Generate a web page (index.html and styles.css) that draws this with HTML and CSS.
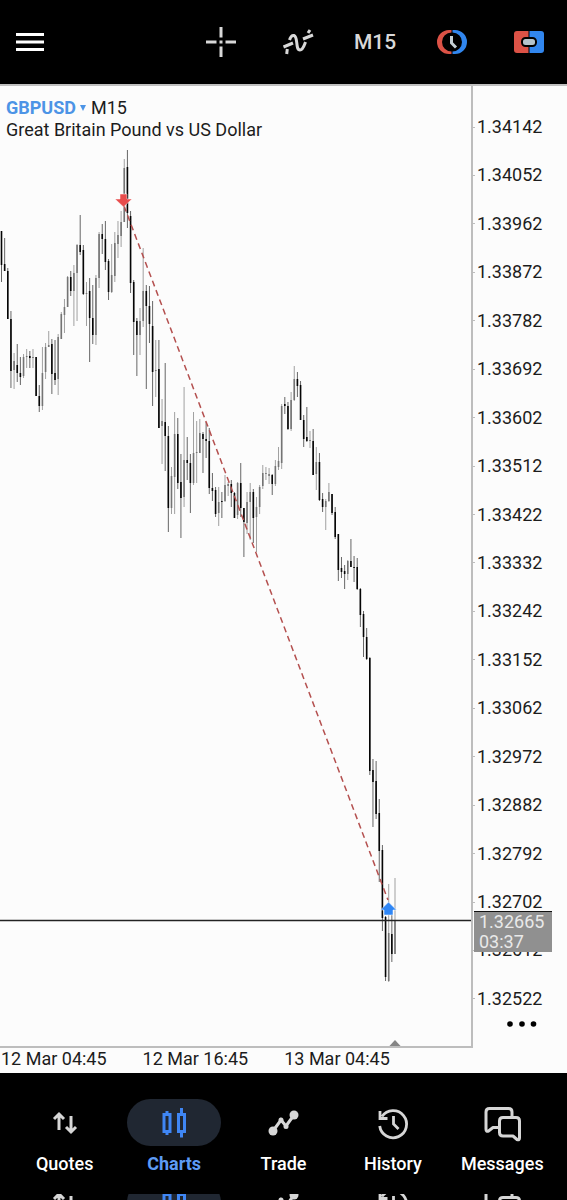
FILE: index.html
```html
<!DOCTYPE html>
<html lang="en">
<head>
    <meta charset="UTF-8">
    <meta name="viewport" content="width=device-width, initial-scale=1.0">
    <title>GBPUSD M15</title>
    <link rel="stylesheet" href="styles.css">
</head>
<body>

<!-- Shared icons -->
<svg class="icon-defs" aria-hidden="true">
    <symbol id="icon-quotes" viewBox="0 0 38 38">
        <path d="M13 26V10M8 15l5-5 5 5M25 12v16M20 23l5 5 5-5" fill="none" stroke="currentColor" stroke-width="3"/>
    </symbol>
    <symbol id="icon-charts" viewBox="0 0 38 38">
        <path d="M9 10.500h6v17h-6zM12 7v3.500M12 27.500v3.500M23.500 10.500h6v17h-6zM26.500 4v6.500M26.500 27.500v6" fill="none" stroke="currentColor" stroke-width="3"/>
    </symbol>
    <symbol id="icon-trade" viewBox="0 0 38 38">
        <path d="M8 27l8-11 5 6 8-11" fill="none" stroke="currentColor" stroke-width="3"/>
        <circle cx="8" cy="27" r="4.500" fill="currentColor"/>
        <circle cx="16" cy="16" r="2.500" fill="currentColor"/>
        <circle cx="21" cy="22.500" r="2.500" fill="currentColor"/>
        <circle cx="29" cy="11" r="4.500" fill="currentColor"/>
    </symbol>
    <symbol id="icon-history" viewBox="0 0 38 38">
        <path d="M8 12.500A13.500 13.500 0 1 1 5.700 22M6 7v7.500h7.500M19.500 12v8l5 5" fill="none" stroke="currentColor" stroke-width="2.800"/>
    </symbol>
    <symbol id="icon-messages" viewBox="0 0 38 38">
        <path d="M15.500 23.500H10L5.500 27Q3 28 3 25V8q0-3.500 3.500-3.500h19q3.500 0 3.500 3.500v5M20 13.500h13q3.500 0 3.500 3.500v17q0 2.500-2.500 1.500L30 32H20q-3.500 0-3.500-3.500V17q0-3.500 3.500-3.500z" fill="none" stroke="currentColor" stroke-width="3" stroke-linejoin="round"/>
    </symbol>
</svg>

<!-- Top Toolbar -->
<header class="toolbar">
    <button class="tool-btn menu-btn" aria-label="Menu">
        <svg width="28" height="28" viewBox="0 0 28 28"><path d="M0 6.500h28M0 14h28M0 21.500h28" stroke="#fff" stroke-width="3"/></svg>
    </button>
    <div class="tools">
        <button class="tool-btn" aria-label="Crosshair">
            <svg width="30" height="30" viewBox="0 0 30 30"><path d="M15 0v10.500M15 19.500V30M0 15h10.500M19.500 15H30M13.500 15h3" stroke="#d8d8d8" stroke-width="3"/></svg>
        </button>
        <button class="tool-btn" aria-label="Indicators">
            <svg width="32" height="26" viewBox="0 0 32 26"><path d="M1.500 18L11 14M21 10l10-4M4.700 25l.6-5M7.500 11Q9 6 12 6.500C16.500 8 13 21 18 21c3 0 4-4 5.500-8M26 4l2-3" fill="none" stroke="#d8d8d8" stroke-width="3"/></svg>
        </button>
        <button class="tool-btn timeframe">M15</button>
        <button class="tool-btn" aria-label="Trading hours">
            <svg width="30" height="24" viewBox="0 0 30 24">
                <path d="M14.500 0H12A12 12 0 0 0 12 24H14.500V21.500A9.500 9.500 0 0 1 14.500 2.500z" fill="#dc5246"/>
                <path d="M15.500 0H18A12 12 0 0 1 18 24H15.500V21.500A9.500 9.500 0 0 0 15.500 2.500z" fill="#3186ee"/>
                <path d="M14.500 6v7l4.500 4.500" fill="none" stroke="#c5d0d6" stroke-width="3"/>
            </svg>
        </button>
        <button class="tool-btn" aria-label="New order">
            <svg width="30" height="22" viewBox="0 0 30 22">
                <path d="M14.500 0H3Q0 0 0 3v16q0 3 3 3h11.500z" fill="#dc5246"/>
                <path d="M15.500 0H27q3 0 3 3v16q0 3-3 3H15.500z" fill="#3186ee"/>
                <rect x="8" y="7" width="14" height="8" rx="3.500" fill="#b5c4cc" stroke="#000" stroke-width="2"/>
            </svg>
        </button>
    </div>
</header>

<!-- Chart -->
<main class="chart">
    <div class="plot-column">
        <div class="plot">
            <svg class="plot-svg" viewBox="0 86 471 960" role="img" aria-label="GBPUSD candlestick chart">
                <g id="candles"></g>
                <path d="M124 206L388 900" stroke="#b4504f" stroke-width="1.500" stroke-dasharray="6 4" fill="none"/>
                <path d="M120 194h7v5h5l-8.500 8-8.500-8h5z" fill="#e84c4c" stroke="#fff" stroke-width=".5"/>
                <path d="M0 920.500h471" stroke="#222" stroke-width="1.500"/>
                <path d="M388.500 902l8 8h-3.500v5h-9v-5h-3.500z" fill="#2f86f5" stroke="#fff" stroke-width=".5"/>
                <path d="M388.500 1047l6.500-7 6.500 7z" fill="#858585"/>
            </svg>
            <div class="chart-title">
                <h1><button class="symbol-btn">GBPUSD <span class="caret"></span></button> M15</h1>
                <p>Great Britain Pound vs US Dollar</p>
            </div>
        </div>
        <div class="time-scale">
            <span>12 Mar 04:45</span>
            <span>12 Mar 16:45</span>
            <span>13 Mar 04:45</span>
        </div>
    </div>
    <div class="price-scale">
        <ul class="prices" id="prices"></ul>
        <div class="price-tag">
            <p>1.32665</p>
            <p>03:37</p>
        </div>
        <button class="more-btn" aria-label="More">
            <svg width="30" height="6" viewBox="0 0 30 6"><circle cx="3" cy="3" r="2.800"/><circle cx="15" cy="3" r="2.800"/><circle cx="26.500" cy="3" r="2.800"/></svg>
        </button>
    </div>
</main>

<!-- Bottom Navigation -->
<nav class="bottom-nav">
    <a href="#quotes" class="nav-item"><span class="nav-icon"><svg><use href="#icon-quotes"/></svg></span>Quotes</a>
    <a href="#charts" class="nav-item active"><span class="nav-icon"><svg><use href="#icon-charts"/></svg></span>Charts</a>
    <a href="#trade" class="nav-item"><span class="nav-icon"><svg><use href="#icon-trade"/></svg></span>Trade</a>
    <a href="#history" class="nav-item"><span class="nav-icon"><svg><use href="#icon-history"/></svg></span>History</a>
    <a href="#messages" class="nav-item"><span class="nav-icon"><svg><use href="#icon-messages"/></svg></span>Messages</a>
</nav>
<div class="nav-edge" aria-hidden="true">
    <div class="nav-item"><span class="nav-icon"><svg><use href="#icon-quotes"/></svg></span></div>
    <div class="nav-item active"><span class="nav-icon"><svg><use href="#icon-charts"/></svg></span></div>
    <div class="nav-item"><span class="nav-icon"><svg><use href="#icon-trade"/></svg></span></div>
    <div class="nav-item"><span class="nav-icon"><svg><use href="#icon-history"/></svg></span></div>
    <div class="nav-item"><span class="nav-icon"><svg><use href="#icon-messages"/></svg></span></div>
</div>

<script src="chart.js"></script>
</body>
</html>
```
FILE: styles.css
```css
* {
    margin: 0;
    padding: 0;
    box-sizing: border-box;
}

body {
    font-family: Roboto, Arial, sans-serif;
    font-size: 18px;
    line-height: 22px;
    color: #1c1c1c;
    background-color: #000;
    min-height: 100vh;
    display: flex;
    flex-direction: column;
}

button {
    font: inherit;
    color: inherit;
    background: none;
    border: none;
    cursor: pointer;
}

svg {
    display: block;
}

.icon-defs {
    display: none;
}

.toolbar {
    display: flex;
    align-items: center;
    justify-content: space-between;
    height: 84px;
    padding: 0 16px;
}

.tools {
    display: flex;
    align-items: center;
    gap: 33px;
}

.tool-btn {
    display: flex;
    align-items: center;
    justify-content: center;
}

.tools .tool-btn {
    width: 44px;
}

.timeframe {
    color: #d8d8d8;
    font-size: 21px;
    font-weight: 500;
}

.chart {
    display: flex;
    background-color: #fcfcfc;
    border-top: 2px solid #c0c0c0;
}

.plot-column {
    flex: 1;
    min-width: 0;
}

.plot {
    position: relative;
    border-right: 2px solid #bdbdbd;
    border-bottom: 2px solid #bdbdbd;
}

.plot-svg {
    width: 100%;
    height: auto;
}

.chart-title {
    position: absolute;
    top: 11px;
    left: 6px;
}

.chart-title h1 {
    font-size: 18px;
    font-weight: 400;
}

.symbol-btn {
    color: #4c94e6;
    font-weight: 700;
}

.caret {
    display: inline-block;
    border: 3px solid transparent;
    border-top: 6px solid #4c94e6;
    border-bottom: none;
    vertical-align: 3px;
}

.time-scale {
    display: grid;
    grid-template-columns: 30% 30% 40%;
    height: 25px;
    padding-left: 1px;
    white-space: nowrap;
}

.price-scale {
    position: relative;
    width: 94px;
    padding-top: 30px;
}

.prices {
    list-style: none;
    height: 894px;
    display: flex;
    flex-direction: column;
    justify-content: space-between;
}

.prices li {
    display: flex;
    align-items: center;
    gap: 2px;
}

.prices li::before {
    content: "";
    width: 2px;
    height: 1px;
    background-color: #bdbdbd;
}

.price-tag {
    position: absolute;
    top: 825px;
    left: 1px;
    width: 78px;
    padding-left: 5px;
    line-height: 20px;
    color: #e9e9e9;
    background-color: #909090;
    border-top: 1px solid #111;
}

.more-btn {
    display: block;
    margin: 11px 0 0 34px;
}

.bottom-nav {
    display: flex;
    height: 121px;
    padding: 26px 10px 0;
}

.nav-item {
    flex: 1;
    display: flex;
    flex-direction: column;
    align-items: center;
    gap: 7px;
    color: #fff;
    font-weight: 500;
    text-decoration: none;
}

.nav-icon {
    width: 94px;
    height: 47px;
    border-radius: 24px;
    display: flex;
    align-items: center;
    justify-content: center;
    color: #d6d6d6;
}

.nav-icon svg {
    width: 38px;
    height: 38px;
}

.nav-item.active {
    color: #5d9bf5;
    font-weight: 700;
}

.active .nav-icon {
    color: #3f86f4;
    background-color: #202732;
}

.nav-edge {
    display: flex;
    height: 6px;
    padding: 0 10px;
    overflow: hidden;
}

.nav-edge .nav-icon {
    margin-top: -15px;
    flex-shrink: 0;
}
```
FILE: chart.js
```javascript
// Each candle: high, low, body top, body bottom, 1 = bearish / 0 = bullish
const candles = [
    [231,282,231,265,1], [238,271,264,271,1], [268,319,271,319,1], [311,388,319,371,1], [353,389,361,370,0],
    [344,382,365,373,1], [357,385,373,377,1], [354,378,357,376,0], [349,368,356,357,0], [351,368,356,358,1],
    [349,368,357,358,0], [357,396,357,396,1], [385,412,396,406,1], [347,410,373,406,0], [343,379,347,372,0],
    [331,347,345,347,0], [339,394,344,374,1], [340,385,373,380,1], [334,395,337,379,0], [312,339,314,339,0],
    [299,333,307,315,0], [276,307,277,307,0], [271,296,277,291,1], [265,326,273,291,0], [244,321,245,273,0],
    [215,255,245,252,1], [245,295,250,294,1], [282,326,293,294,0], [278,362,291,318,1], [285,344,318,335,1],
    [275,345,278,335,0], [232,288,234,278,0], [224,254,234,239,1], [221,270,239,262,1], [259,300,261,292,1],
    [244,293,275,292,0], [232,282,243,276,0], [221,258,235,244,0], [211,247,222,236,0], [159,222,168,222,0],
    [150,228,167,213,1], [211,293,216,283,1], [280,355,282,322,1], [318,376,321,335,1], [308,355,321,335,0],
    [248,327,291,321,0], [285,389,291,306,1], [286,343,306,324,1], [301,406,326,372,1], [340,397,370,371,0],
    [340,428,369,428,1], [399,464,421,426,0], [363,471,422,436,1], [426,532,436,508,1], [467,514,476,508,0],
    [412,514,434,477,0], [418,489,434,483,1], [454,538,482,498,1], [387,507,460,497,0], [437,480,460,463,1],
    [454,513,463,483,1], [412,485,453,483,0], [421,483,452,453,0], [419,453,433,453,0], [432,473,434,439,1],
    [422,458,439,441,1], [428,494,441,488,1], [473,501,488,491,1], [487,517,490,514,1], [487,526,502,513,0],
    [492,518,501,502,1], [475,502,485,501,0], [482,496,484,486,0], [480,507,484,493,1], [492,518,493,518,1],
    [482,519,483,515,0], [463,517,483,508,1], [508,557,508,522,1], [492,534,502,523,0], [483,540,492,502,0],
    [489,543,492,518,1], [497,552,507,517,0], [485,514,487,507,0], [465,489,473,486,0], [467,480,473,474,0],
    [468,484,474,476,0], [474,495,475,484,1], [460,486,466,484,0], [447,470,461,467,0], [404,469,406,463,0],
    [397,414,404,406,1], [402,430,406,429,1], [392,431,400,429,0], [366,401,379,400,0], [372,397,379,386,1],
    [381,420,385,420,1], [415,447,420,439,1], [407,442,437,441,1], [431,448,440,441,0], [429,475,441,475,1],
    [447,490,462,474,0], [453,501,462,500,1], [493,512,499,507,1], [499,530,501,507,0], [483,502,492,501,0],
    [494,515,494,513,1], [507,539,512,537,1], [534,581,534,570,1], [557,578,568,572,1], [565,589,571,574,1],
    [560,580,561,574,0], [539,567,561,567,1], [556,582,567,568,1], [558,590,567,589,1], [588,627,589,615,1],
    [611,657,614,637,1], [628,660,637,659,1], [657,775,658,771,1], [759,827,770,782,1], [761,819,781,814,1],
    [799,882,813,851,1], [845,931,850,918,1], [916,981,917,977,1], [884,982,933,981,0], [915,962,934,954,1],
    [878,954,920,954,0]
];

const step = 3.148;
let markup = '';
candles.forEach(([high, low, top, bottom, bearish], i) => {
    const x = 1.5 + i * step;
    const wick = bearish ? '#666' : '#a0a0a0';
    const body = bearish ? '#050505' : '#747474';
    markup += `<path d="M${x} ${high}V${low}" stroke="${wick}" stroke-width="1"/>`;
    markup += `<path d="M${x} ${top}V${bottom}" stroke="${body}" stroke-width="1.6"/>`;
});
document.getElementById('candles').innerHTML = markup;

// Price labels, 90 points apart
const prices = document.getElementById('prices');
for (let points = 134142; points >= 132522; points -= 90) {
    const item = document.createElement('li');
    item.textContent = (points / 100000).toFixed(5);
    prices.appendChild(item);
}
```
